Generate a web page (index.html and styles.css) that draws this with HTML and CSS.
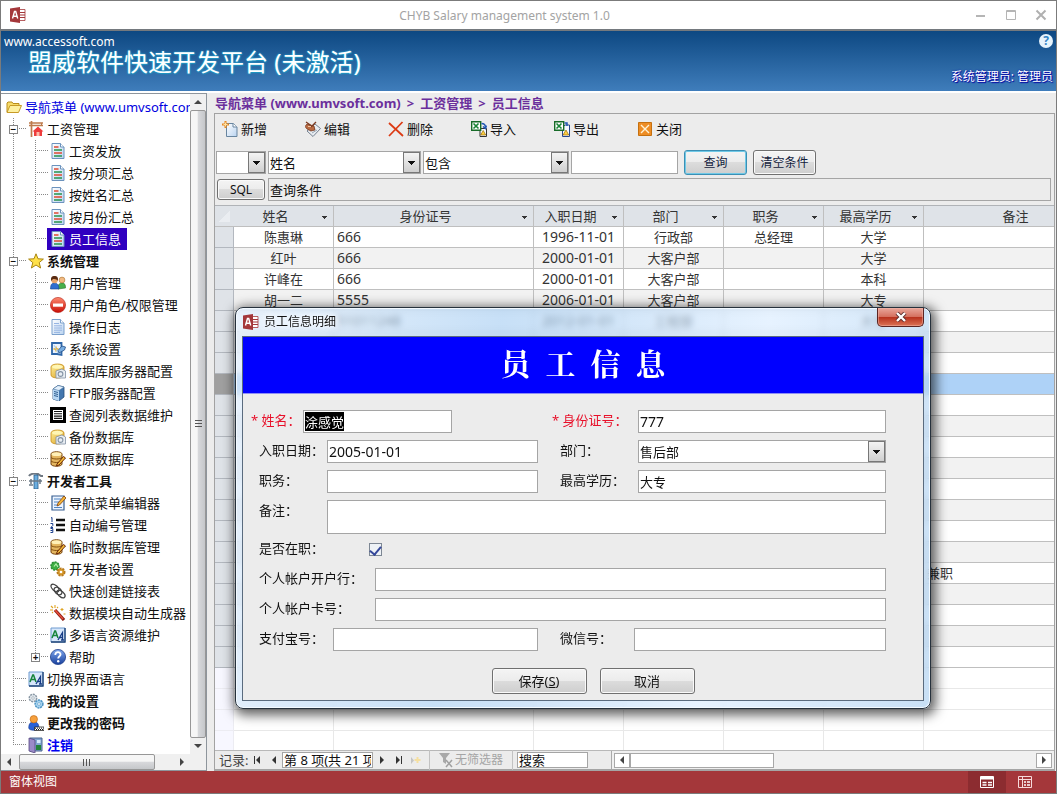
FILE: index.html
```html
<!DOCTYPE html>
<html lang="zh-CN">
<head>
<meta charset="utf-8">
<title>CHYB Salary management system 1.0</title>
<link rel="stylesheet" href="styles.css">
</head>
<body>
<svg class="sprite" aria-hidden="true">
  <defs>
    <linearGradient id="g-blue" x1="0" y1="0" x2="0" y2="1"><stop offset="0" stop-color="#7fa8ee"/><stop offset="1" stop-color="#173f9c"/></linearGradient>
    <linearGradient id="g-page" x1="0" y1="0" x2="1" y2="1"><stop offset="0" stop-color="#fff"/><stop offset="1" stop-color="#b9d3f0"/></linearGradient>
    <linearGradient id="g-gold" x1="0" y1="0" x2="1" y2="1"><stop offset="0" stop-color="#fff3a0"/><stop offset="1" stop-color="#d99a18"/></linearGradient>
    <linearGradient id="g-red" x1="0" y1="0" x2="0" y2="1"><stop offset="0" stop-color="#ff8a70"/><stop offset="1" stop-color="#c80d05"/></linearGradient>
  </defs>
  <symbol id="access" viewBox="0 0 16 16"><path d="M9 2.5h6v11H9z" fill="#fff" stroke="#a4373a" stroke-width=".8"/><path d="M10 5.500h5M10 8h5M10 10.500h5" stroke="#a4373a" stroke-width="1.200"/><path d="M0 1.500 10 0v16L0 14.500z" fill="#a4373a"/><path d="m2.500 11.500 2-7h1.200l2 7M3.300 9.200h3.500" fill="none" stroke="#fff" stroke-width="1.400"/></symbol>
  <symbol id="folder" viewBox="0 0 16 16"><path d="M1 13V4l1-1h4l1 1.500h6V7" fill="#f7dc6a" stroke="#b98d1c"/><path d="m1 13.500 3-7h11.500l-3 7z" fill="#fdf0a0" stroke="#c79a26"/></symbol>
  <symbol id="house" viewBox="0 0 16 16"><path d="M1 2h14M3.500 0v16M1 4.500h14" stroke="#bd7b4c" stroke-width="1.700"/><path d="M13.500 2v3" stroke="#bd7b4c"/><path d="M4.500 10.500 10 5.500l5.500 5H14V15H6v-4.500z" fill="#ee3c3c"/><path d="M8.500 11h3v4h-3z" fill="#ffb9a8"/></symbol>
  <symbol id="report" viewBox="0 0 16 16"><path d="M2 .5h8.500L14 4v11.500H2z" fill="url(#g-page)" stroke="#6b92bd"/><path d="M10.500.5V4H14" fill="#fff" stroke="#6b92bd"/><path d="M4 4h4.500M4 10h8" stroke="#e04a32" stroke-width="1.400"/><path d="M4 7h8M4 13h8" stroke="#27934c" stroke-width="1.400"/></symbol>
  <symbol id="star" viewBox="0 0 16 16"><path d="m8 .8 2 5 5.400.3-4.200 3.500 1.400 5.400L8 12l-4.600 3 1.400-5.400L.6 6.100 6 5.800z" fill="#ffe14a" stroke="#aa8510"/></symbol>
  <symbol id="users" viewBox="0 0 16 16"><path d="M8 14c0-4 1-6 4-6s3.500 2 3.500 5z" fill="#47b04b" stroke="#2a7530" stroke-width=".6"/><circle cx="12" cy="5" r="2.900" fill="#f2ba83" stroke="#a8712f" stroke-width=".6"/><path d="M.5 14c0-4 1-6 4-6s4.500 2 4.500 6z" fill="#2e6ed0" stroke="#194489" stroke-width=".6"/><circle cx="4.500" cy="5" r="3.200" fill="#e7a46b"/><path d="M1.200 6C.5 2 2 1 4.500 1S8.500 2 7.800 6C7 4 4 4 3 4z" fill="#5a2c12"/></symbol>
  <symbol id="stop" viewBox="0 0 16 16"><circle cx="8" cy="8" r="7.600" fill="url(#g-red)" stroke="#b31d12" stroke-width=".6"/><path d="M3 6.500h10v3.200H3z" fill="#fff"/></symbol>
  <symbol id="log" viewBox="0 0 16 16"><path d="M2 .5h8.500L14 4v11.500H2z" fill="url(#g-page)" stroke="#7ba0cc"/><path d="M10.500.5V4H14" fill="#fff" stroke="#7ba0cc"/><path d="M4 4.500h5M4 6.800h8M4 9h8M4 11.200h8M4 13.400h6" stroke="#8daee0" stroke-width=".9"/></symbol>
  <symbol id="config" viewBox="0 0 16 16"><path d="M2 2h9.500v12L7 13H2z" fill="#e9f3ff" stroke="#2e66a9" stroke-width="1.800"/><path d="M3.500 8h5M6 5.500v5" stroke="#e5ad27" stroke-width="1.300"/><path d="m4 4 4 8" stroke="#a9cdf0"/><path d="m8 9.500 4-4.500 3.500 1-1 3-5.500 3z" fill="#78aee2" stroke="#244f88" stroke-width=".8"/></symbol>
  <symbol id="dbserver" viewBox="0 0 16 16"><path d="M1 4c0-4 13-4 13 0v8c0 4-13 4-13 0z" fill="url(#g-gold)" stroke="#c78c15" stroke-width=".8"/><ellipse cx="7.500" cy="3.800" rx="5.500" ry="2" fill="#fff6b4"/><path d="M6 8l6-2 3.500 2v7H6z" fill="#e9eef3" stroke="#8291a3" stroke-width=".8"/><circle cx="10.500" cy="11" r="2.400" fill="none" stroke="#8493a5" stroke-width="1.100"/></symbol>
  <symbol id="server" viewBox="0 0 16 16"><path d="m3 4 5-3.500L14 2v10l-5 4-6-2z" fill="#4377af" stroke="#264c7a" stroke-width=".8"/><path d="m3 4 6 1.500V16l-6-2z" fill="#b7d7f4"/><path d="m3 4 5-3.500L14 2 9 5.500z" fill="#e3f0fc" stroke="#49739d" stroke-width=".5"/><path d="m4 6.500 4 1M4 8.500l4 1M4 10.500l4 1" stroke="#315f90"/></symbol>
  <symbol id="list" viewBox="0 0 16 16"><path d="M0 0h16v16H0z"/><path d="M3 3h10v10H3z" fill="#fff"/><path d="M4 4.500h8M4 6.800h8M4 9.100h8M4 11.400h8" stroke="#111" stroke-width="1.100"/></symbol>
  <symbol id="dbedit" viewBox="0 0 16 16"><path d="M1 3c0-3 11-3 11 0v10c0 3-11 3-11 0z" fill="#e4b660" stroke="#75430d"/><ellipse cx="6.500" cy="3.200" rx="5" ry="1.900" fill="#fff0b8"/><path d="M1 6.500c2 2 9 2 11 0M1 10c2 2 9 2 11 0" fill="none" stroke="#85500f"/><path d="m7 13 6.500-7.500 2 1.500L9 14l-2.500 1z" fill="#f5be38" stroke="#6b2506"/></symbol>
  <symbol id="tools" viewBox="0 0 16 16"><path d="M1 3c1-2 5-3 9-2l3 2h2" fill="none" stroke="#6f7882" stroke-width="2"/><path d="M6 2h4v14H6z" fill="#6baee0" stroke="#285b88" stroke-width=".8"/><path d="M1 8h13M3 6v5M12 6v5M1 12h4" stroke="#6b7987" stroke-width="1.500"/></symbol>
  <symbol id="noteedit" viewBox="0 0 16 16"><path d="M2 1h12v14H2z" fill="#ecf4ff" stroke="#385f91" stroke-width="1.200"/><path d="M4 4h7M4 7h5M4 10h3M4 12.500h8" stroke="#4f84c2"/><path d="m7 11 1-3 6-7 2 2-6.500 7z" fill="#f4b437" stroke="#7c3d0c" stroke-width=".8"/></symbol>
  <symbol id="numbers" viewBox="0 0 16 16"><path d="M6 3h9M6 8h9M6 13h9" stroke="#111" stroke-width="2.600"/><path d="m1 1 1-.5V5M.5 6.500h2.300v2l-2 2H3M.5 11.500h2.300v4H.5m0-2h2" fill="none" stroke="#193d8c"/></symbol>
  <symbol id="gears" viewBox="0 0 16 16"><circle cx="5" cy="5" r="4" fill="#3eaf43" stroke="#2b8c35" stroke-dasharray="2 1" stroke-width="1.500"/><path d="M4 5.500 6 3l2 3" fill="none" stroke="#b8efb0" stroke-width="1.200"/><circle cx="11" cy="11" r="3.600" fill="#d79a2c" stroke="#b87a1c" stroke-dasharray="2 1" stroke-width="1.800"/><circle cx="11" cy="11" r="1.300" fill="#fff"/></symbol>
  <symbol id="link" viewBox="0 0 16 16"><g fill="none" stroke="#444" stroke-width="1.300"><ellipse cx="5" cy="5" rx="4.800" ry="2.600" transform="rotate(42 5 5)"/><ellipse cx="8" cy="8" rx="4.500" ry="2.900" transform="rotate(42 8 8)"/><ellipse cx="11" cy="11" rx="4.800" ry="2.600" transform="rotate(42 11 11)"/></g></symbol>
  <symbol id="wand" viewBox="0 0 16 16"><path d="m5 5 9 10" stroke="#8c1d13" stroke-width="3.200"/><path d="m5 5 8 9" stroke="#e8503b" stroke-width="1.400"/><path d="M5 0v3M0 5h3M1 1l2 2M8 2 7 3M2 8l1-1M12 3v3M10.500 4.500h3M13.500 9h2" stroke="#e0a524" stroke-width="1.100"/></symbol>
  <symbol id="lang" viewBox="0 0 16 16"><path d="M1 1h14v14H1z" fill="#d7e7fb" stroke="#6e9bd0"/><path d="M15 1v14H1" fill="none" stroke="#23477a" stroke-width="1.400"/><path d="m2 11 2.800-7h.7L8 11M3.500 8.500h4" fill="none" stroke="#16843a" stroke-width="1.500"/><path d="m8 13 4.500-7.500V13M9.500 10.500h3M11 13h3" fill="none" stroke="#173c85" stroke-width="1.300"/></symbol>
  <symbol id="help" viewBox="0 0 16 16"><circle cx="8" cy="8" r="7.600" fill="url(#g-blue)" stroke="#23438d" stroke-width=".8"/><path d="M5.300 6c0-4 5.600-3.500 5.200-.3C10.300 7.400 8.200 7.200 8.200 9.600" fill="none" stroke="#fff" stroke-width="1.900"/><circle cx="8.200" cy="12.200" r="1.200" fill="#fff"/></symbol>
  <symbol id="mygear" viewBox="0 0 16 16"><circle cx="5" cy="5" r="3.700" fill="#e3e9ee" stroke="#8a98a5" stroke-width="1.500" stroke-dasharray="2 .8"/><circle cx="5" cy="5" r="1.300" fill="#fff" stroke="#8a98a5" stroke-width=".6"/><circle cx="11" cy="11" r="3.900" fill="#a5d1ee" stroke="#4b93c3" stroke-width="1.500" stroke-dasharray="2 .8"/><circle cx="11" cy="11" r="1.400" fill="#fff" stroke="#4b93c3" stroke-width=".6"/></symbol>
  <symbol id="password" viewBox="0 0 16 16"><path d="M.8 13c0-5 2-6 5-6s5 1 5 6c0 3-10 3-10 0z" fill="#2a62d8" stroke="#173c96" stroke-width=".7"/><circle cx="5.800" cy="4.200" r="3.700" fill="#f6a03c" stroke="#b8620e" stroke-width=".6"/><path d="M6.500 12H16v3.500H6.500z" fill="#fff" stroke="#111" stroke-width=".7"/><path d="M7 13.200h8.500M8 14.500h7" stroke="#111" stroke-dasharray="1 1"/></symbol>
  <symbol id="logout" viewBox="0 0 16 16"><path d="M2 1h12v13H2z" fill="#81a5d2" stroke="#4c648f"/><path d="m1 1 6 2v13l-6-2z" fill="#9a8ac8" stroke="#554880" stroke-width=".8"/><path d="M9 3h3.500v3H9z" fill="#d6e8fa"/><path d="M8 8h5v5H8z" fill="#23833b"/></symbol>
  <symbol id="new" viewBox="0 0 16 16"><path d="M4.500 2.500h7L15 6v9.500H4.500z" fill="url(#g-page)" stroke="#68859f"/><path d="M11 2.500V6h4" fill="#fff" stroke="#68859f"/><path d="M3.500 0v7M0 3.500h7" stroke="#e78821" stroke-width="2"/><path d="M3.500 1.500v4M1.500 3.500h4" stroke="#ffe2a0"/></symbol>
  <symbol id="edit" viewBox="0 0 16 16"><path d="m2 10 8-7 5.500 4.500L8 15.500z" fill="#e8edf2" stroke="#75818f"/><path d="m5 10 5-3M7 12l5-3" stroke="#98a5b2"/><path d="M0 5.500 2 3l3 1 4 1 1 4-4 1-4-2z" fill="#b96a42" stroke="#6b3018" stroke-width=".7"/><path d="m1 1 5 3.500M6 6l5-5" stroke="#7c3a20" stroke-width="1.300"/><path d="M3 5.500h3" stroke="#f0c8a4"/></symbol>
  <symbol id="delete" viewBox="0 0 16 16"><path d="m1 2 14 13M14.500 1 1 15" fill="none" stroke="#dc3b14" stroke-width="1.800"/></symbol>
  <symbol id="sheet" viewBox="0 0 16 16"><path d="M.7.700h9v8.600h-9z" fill="#fff" stroke="#176b28" stroke-width="1.400"/><path d="m2.500 2.500 5 5m0-5-5 5" stroke="#178334" stroke-width="1.600"/></symbol>
  <symbol id="import" viewBox="0 0 16 16"><path d="M9 7.500h6.500v8H9z" fill="#f4f8ff" stroke="#333"/><use href="#sheet"/><path d="m12.200 9.500 2.500 4.500h-5z" fill="#ffd343" stroke="#9b6b00" stroke-width=".7"/><path d="M10.500 2.500c3 0 4 1.500 4 4M12 5.500l2.500 2 1-3" fill="none" stroke="#2057b3" stroke-width="1.500"/></symbol>
  <symbol id="export" viewBox="0 0 16 16"><path d="M8.500 6.500 11 4h4.500v11.500h-7z" fill="#f4f8ff" stroke="#27488c"/><use href="#sheet"/><path d="m12 9 2.700 5H9z" fill="#ffd343" stroke="#9b6b00" stroke-width=".7"/><path d="M10.500 2h2.500v3" fill="none" stroke="#2057b3" stroke-width="1.500"/></symbol>
  <symbol id="close" viewBox="0 0 16 16"><path d="M1.500 1.500h13v13h-13z" fill="#ee8d24" stroke="#c5700f"/><path d="m4 4 8 8m0-8-8 8" stroke="#fff3d5" stroke-width="1.400"/></symbol>
</svg>

<div class="window">
  <header class="titlebar">
    <svg class="app-icon"><use href="#access"/></svg>
    <h1 class="window-title">CHYB Salary management system 1.0</h1>
    <div class="window-controls">
      <button aria-label="最小化"><svg viewBox="0 0 12 12"><path d="M1 7h9" stroke="#b5b5b5" stroke-width="2"/></svg></button>
      <button aria-label="最大化"><svg viewBox="0 0 12 12"><path d="M1.500 1.500h9v9h-9zM1 2.500h10" fill="none" stroke="#b5b5b5"/></svg></button>
      <button aria-label="关闭"><svg viewBox="0 0 12 12"><path d="m1.500 1.500 9 9m0-9-9 9" stroke="#b0b0b0" stroke-width="2"/></svg></button>
    </div>
  </header>

  <div class="banner">
    <div class="brand">
      <a class="site" href="#">www.accessoft.com</a>
      <div class="product">盟威软件快速开发平台 (未激活)</div>
    </div>
    <div class="account">
      <button class="help" aria-label="帮助">?</button>
      <div class="user">系统管理员: 管理员</div>
    </div>
  </div>

  <div class="main">
    <nav class="sidebar">
      <div class="tree">
        <a class="item root" href="#"><svg><use href="#folder"/></svg>导航菜单 (www.umvsoft.com)</a>
        <ul>
          <li><div class="row"><button class="toggle" aria-label="折叠">−</button><a class="item" href="#"><svg><use href="#house"/></svg>工资管理</a></div>
            <ul>
              <li><div class="row"><a class="item" href="#"><svg><use href="#report"/></svg>工资发放</a></div></li>
              <li><div class="row"><a class="item" href="#"><svg><use href="#report"/></svg>按分项汇总</a></div></li>
              <li><div class="row"><a class="item" href="#"><svg><use href="#report"/></svg>按姓名汇总</a></div></li>
              <li><div class="row"><a class="item" href="#"><svg><use href="#report"/></svg>按月份汇总</a></div></li>
              <li><div class="row"><a class="item selected" href="#"><svg><use href="#report"/></svg>员工信息</a></div></li>
            </ul>
          </li>
          <li><div class="row"><button class="toggle" aria-label="折叠">−</button><a class="item strong" href="#"><svg><use href="#star"/></svg>系统管理</a></div>
            <ul>
              <li><div class="row"><a class="item" href="#"><svg><use href="#users"/></svg>用户管理</a></div></li>
              <li><div class="row"><a class="item" href="#"><svg><use href="#stop"/></svg>用户角色/权限管理</a></div></li>
              <li><div class="row"><a class="item" href="#"><svg><use href="#log"/></svg>操作日志</a></div></li>
              <li><div class="row"><a class="item" href="#"><svg><use href="#config"/></svg>系统设置</a></div></li>
              <li><div class="row"><a class="item" href="#"><svg><use href="#dbserver"/></svg>数据库服务器配置</a></div></li>
              <li><div class="row"><a class="item" href="#"><svg><use href="#server"/></svg>FTP服务器配置</a></div></li>
              <li><div class="row"><a class="item" href="#"><svg><use href="#list"/></svg>查阅列表数据维护</a></div></li>
              <li><div class="row"><a class="item" href="#"><svg><use href="#dbserver"/></svg>备份数据库</a></div></li>
              <li><div class="row"><a class="item" href="#"><svg><use href="#dbedit"/></svg>还原数据库</a></div></li>
            </ul>
          </li>
          <li><div class="row"><button class="toggle" aria-label="折叠">−</button><a class="item strong" href="#"><svg><use href="#tools"/></svg>开发者工具</a></div>
            <ul>
              <li><div class="row"><a class="item" href="#"><svg><use href="#noteedit"/></svg>导航菜单编辑器</a></div></li>
              <li><div class="row"><a class="item" href="#"><svg><use href="#numbers"/></svg>自动编号管理</a></div></li>
              <li><div class="row"><a class="item" href="#"><svg><use href="#dbedit"/></svg>临时数据库管理</a></div></li>
              <li><div class="row"><a class="item" href="#"><svg><use href="#gears"/></svg>开发者设置</a></div></li>
              <li><div class="row"><a class="item" href="#"><svg><use href="#link"/></svg>快速创建链接表</a></div></li>
              <li><div class="row"><a class="item" href="#"><svg><use href="#wand"/></svg>数据模块自动生成器</a></div></li>
              <li><div class="row"><a class="item" href="#"><svg><use href="#lang"/></svg>多语言资源维护</a></div></li>
              <li><div class="row"><button class="toggle" aria-label="展开">+</button><a class="item" href="#"><svg><use href="#help"/></svg>帮助</a></div></li>
            </ul>
          </li>
          <li><div class="row"><a class="item" href="#"><svg><use href="#lang"/></svg>切换界面语言</a></div></li>
          <li><div class="row"><a class="item strong" href="#"><svg><use href="#mygear"/></svg>我的设置</a></div></li>
          <li><div class="row"><a class="item strong" href="#"><svg><use href="#password"/></svg>更改我的密码</a></div></li>
          <li><div class="row"><a class="item strong blue" href="#"><svg><use href="#logout"/></svg>注销</a></div></li>
        </ul>
      </div>
      <div class="vscroll">
        <button class="arrow up" aria-label="向上"></button>
        <div class="thumb"><i></i></div>
        <button class="arrow down" aria-label="向下"></button>
      </div>
      <div class="hscroll">
        <button class="arrow left" aria-label="向左"></button>
        <div class="thumb"><i></i></div>
        <button class="arrow right" aria-label="向右"></button>
      </div>
    </nav>

    <main class="content">
      <div class="breadcrumb"><span>导航菜单 (www.umvsoft.com)</span><span>&gt;</span><span>工资管理</span><span>&gt;</span><span>员工信息</span></div>
      <section class="panel">
        <div class="toolbar">
          <button><svg><use href="#new"/></svg>新增</button>
          <button><svg><use href="#edit"/></svg>编辑</button>
          <button><svg><use href="#delete"/></svg>删除</button>
          <button><svg><use href="#import"/></svg>导入</button>
          <button><svg><use href="#export"/></svg>导出</button>
          <button><svg><use href="#close"/></svg>关闭</button>
        </div>
        <div class="filters">
          <select class="logic" aria-label="逻辑"><option></option></select>
          <select class="field-name" aria-label="字段"><option>姓名</option></select>
          <select class="operator" aria-label="条件"><option>包含</option></select>
          <input class="value" type="text" aria-label="值">
          <button class="btn primary">查询</button>
          <button class="btn">清空条件</button>
        </div>
        <div class="sql">
          <button class="btn">SQL</button>
          <input type="text" aria-label="查询条件" value="查询条件" readonly>
        </div>
        <div class="grid">
          <table>
            <colgroup><col class="c-sel"><col class="c-mid"><col class="c-id"><col class="c-date"><col class="c-mid"><col class="c-mid"><col class="c-mid"><col class="c-note"></colgroup>
            <thead><tr><th class="corner"></th><th>姓名</th><th>身份证号</th><th>入职日期</th><th>部门</th><th>职务</th><th>最高学历</th><th>备注</th></tr></thead>
            <tbody>
              <tr><td><td>陈惠琳<td>666<td>1996-11-01<td>行政部<td>总经理<td>大学<td></tr>
              <tr><td><td>红叶<td>666<td>2000-01-01<td>大客户部<td><td>大学<td></tr>
              <tr><td><td>许峰在<td>666<td>2000-01-01<td>大客户部<td><td>本科<td></tr>
              <tr><td><td>胡一二<td>5555<td>2006-01-01<td>大客户部<td><td>大专<td></tr>
              <tr><td><td><td>51011248<td>2012-01-01<td>工程部<td><td>大专<td></tr>
              <tr><td><td><td><td><td><td><td><td></tr>
              <tr><td><td><td><td><td><td><td><td></tr>
              <tr class="current"><td><td><td><td><td><td><td><td></tr>
              <tr><td><td><td><td><td><td><td><td></tr>
              <tr><td><td><td><td><td><td><td><td></tr>
              <tr><td><td><td><td><td><td><td><td></tr>
              <tr><td><td><td><td><td><td><td><td></tr>
              <tr><td><td><td><td><td><td><td><td></tr>
              <tr><td><td><td><td><td><td><td><td></tr>
              <tr><td><td><td><td><td><td><td><td></tr>
              <tr><td><td><td><td><td><td><td><td></tr>
              <tr><td><td><td><td><td><td><td><td>兼职</tr>
              <tr><td><td><td><td><td><td><td><td></tr>
              <tr><td><td><td><td><td><td><td><td></tr>
              <tr><td><td><td><td><td><td><td><td></tr>
              <tr><td><td><td><td><td><td><td><td></tr>
            </tbody>
            <tbody class="blank">
              <tr><td><td><td><td><td><td><td><td></tr>
              <tr><td><td><td><td><td><td><td><td></tr>
              <tr><td><td><td><td><td><td><td><td></tr>
              <tr><td><td><td><td><td><td><td><td></tr>
            </tbody>
          </table>
        </div>
        <div class="records">
          <span class="rec-label">记录:</span>
          <button aria-label="第一条"><svg viewBox="0 0 10 10"><path d="M2.500 1v8" stroke="#333"/><path d="M8 1v8L4 5z" fill="#333"/></svg></button>
          <button aria-label="上一条"><svg viewBox="0 0 10 10"><path d="M7 1v8L3 5z" fill="#333"/></svg></button>
          <input class="position" type="text" aria-label="当前记录" value="第 8 项(共 21 项)">
          <button aria-label="下一条"><svg viewBox="0 0 10 10"><path d="M3 1v8l4-4z" fill="#333"/></svg></button>
          <button aria-label="最后一条"><svg viewBox="0 0 10 10"><path d="M7.500 1v8" stroke="#333"/><path d="M2 1v8l4-4z" fill="#333"/></svg></button>
          <button aria-label="新记录" disabled><svg viewBox="0 0 10 10"><path d="M0 2v7l3-3.500z" fill="#c4c4c4"/><path d="M6.500 2v6M3.500 5h6" stroke="#f5dfa0" stroke-width="2"/></svg></button>
          <span class="nofilter"><svg viewBox="0 0 16 16"><path d="M1 1h11L8 6v6l-3-2V6z" fill="#a9a9a9"/><path d="m8 8 6 7m0-7-6 7" stroke="#a0a0a0" stroke-width="1.500"/></svg>无筛选器</span>
          <input class="search" type="text" aria-label="搜索" value="搜索">
          <div class="grid-scroll"><button class="arrow left" aria-label="向左"></button><div class="bar"></div><button class="arrow right" aria-label="向右"></button></div>
        </div>
      </section>
    </main>
  </div>

  <footer class="status">
    <span>窗体视图</span>
    <div class="views">
      <button class="active" aria-label="窗体视图"><svg viewBox="0 0 14 14"><path d="M.5 1.500h13v11H.5z" fill="none" stroke="#fff"/><path d="M1 1h12v3.500H1z" fill="#fff"/><path d="M2.500 7.500h4M2.500 10h4M8 7.500h4M8 10h4" stroke="#fff" stroke-width="1.500"/></svg></button>
      <button aria-label="布局视图"><svg viewBox="0 0 14 14"><path d="M.5 1.500h13v11H.5zM.5 4.500h13M4.500 1v11" fill="none" stroke="#f6dada"/><path d="M6 7h2M6 10h2M9 7h3M9 10h3" stroke="#fff" stroke-width="1.300"/></svg></button>
    </div>
  </footer>
</div>

<div class="dialog" role="dialog" aria-labelledby="dialog-title">
  <div class="dialog-bar">
    <svg class="app-icon"><use href="#access"/></svg>
    <span id="dialog-title">员工信息明细</span>
    <button class="dialog-close" aria-label="关闭"><svg viewBox="0 0 12 10"><path d="m2 1 8 8m0-8-8 8" stroke="#5b2b2b" stroke-width="4"/><path d="m2 1 8 8m0-8-8 8" stroke="#fff" stroke-width="2.400"/></svg></button>
  </div>
  <form class="dialog-body">
    <h2>员&nbsp; 工&nbsp; 信&nbsp; 息</h2>
    <div class="form">
      <div class="line">
        <div class="cell required"><label class="l-xs" for="name">* 姓名：</label><input id="name" class="short" type="text" value="涂感觉" autofocus></div>
        <div class="cell right required"><label class="l-rq" for="idno">* 身份证号：</label><input id="idno" class="num" type="text" value="777"></div>
      </div>
      <div class="line">
        <div class="cell"><label class="l-sm" for="hired">入职日期：</label><input id="hired" class="num" type="text" value="2005-01-01"></div>
        <div class="cell right"><label class="l-md" for="dept">部门：</label><select id="dept"><option>售后部</option></select></div>
      </div>
      <div class="line">
        <div class="cell"><label class="l-sm" for="post">职务：</label><input id="post" type="text"></div>
        <div class="cell right"><label class="l-md" for="degree">最高学历：</label><input id="degree" type="text" value="大专"></div>
      </div>
      <div class="line">
        <div class="cell wide"><label class="l-sm" for="note">备注：</label><textarea id="note"></textarea></div>
      </div>
      <div class="line check">
        <div class="cell wide"><label class="l-lg" for="active">是否在职：</label><input id="active" type="checkbox" checked></div>
      </div>
      <div class="line">
        <div class="cell wide"><label class="l-xl" for="bank">个人帐户开户行：</label><input id="bank" type="text"></div>
      </div>
      <div class="line">
        <div class="cell wide"><label class="l-xl" for="card">个人帐户卡号：</label><input id="card" type="text"></div>
      </div>
      <div class="line">
        <div class="cell"><label class="l-pay" for="alipay">支付宝号：</label><input id="alipay" type="text"></div>
        <div class="cell right"><label class="l-pay" for="wechat">微信号：</label><input id="wechat" type="text"></div>
      </div>
    </div>
    <div class="actions">
      <button class="btn" type="button">保存(<u>S</u>)</button>
      <button class="btn" type="button">取消</button>
    </div>
  </form>
</div>
<script src="main.js"></script>
</body>
</html>
```
FILE: styles.css
```css
* { box-sizing: border-box; }

body {
  margin: 0;
  height: 100vh;
  overflow: hidden;
  position: relative;
  font: 13px/20px "Noto Sans", "Noto Sans CJK SC", sans-serif;
  color: #111;
}

button, input, select, textarea {
  font: inherit;
  color: inherit;
  margin: 0;
  border-radius: 0;
  outline: 0;
}
button { padding: 0; border: 0; background: none; }
a { color: inherit; text-decoration: none; }
svg { display: block; flex: none; }
.sprite { position: absolute; width: 0; height: 0; }

.window {
  height: 100%;
  display: flex;
  flex-direction: column;
  border: 1px solid #7b7b7b;
  background: #fff;
}

/* Title bar */
.titlebar {
  display: flex;
  align-items: center;
  height: 30px;
  padding: 0 9px;
  border-bottom: 2px solid #74797e;
}
.app-icon { width: 16px; height: 16px; }
.window-title { flex: 1; margin: 0; padding: 2px 0 0 8px; font-size: 12px; font-weight: 400; text-align: center; color: #a3a3a3; }
.window-controls { display: flex; gap: 18px; }
.window-controls svg { width: 12px; height: 12px; }

/* Banner */
.banner {
  display: flex;
  justify-content: space-between;
  height: 60px;
  color: #fff;
  background: linear-gradient(#0d4882, #3f7dbb);
}
.brand { padding: 1px 3px; }
.site { display: block; font-size: 12px; line-height: 20px; }
.product {
  padding-left: 24px;
  font-size: 24px;
  line-height: 20px;
  text-shadow: 0 0 2px #27c4e8, 1px 1px 1px #1d87b4;
}
.account {
  display: flex;
  flex-direction: column;
  align-items: flex-end;
  justify-content: space-between;
  padding: 3px 3px 4px;
}
.help {
  width: 14px;
  height: 14px;
  border-radius: 50%;
  background: #e6f3fc;
  color: #3484c4;
  font-size: 12px;
  font-weight: 700;
  line-height: 14px;
}
.user { font-size: 12px; text-shadow: 0 0 2px #0000b0, 1px 1px 1px #0000a0; }

.main { flex: 1; min-height: 0; display: flex; padding-top: 2px; }

/* Navigation tree */
.sidebar {
  flex: none;
  width: 206px;
  display: grid;
  grid-template: 1fr 16px / 1fr 16px;
  border: 1px solid #8e959c;
  border-left: 0;
}
.tree { overflow: hidden; padding: 2px 0 0 1px; white-space: nowrap; }
.tree ul { list-style: none; margin: 0; padding: 0; }
.tree ul ul { padding-left: 22px; }
.tree li {
  background:
    repeating-linear-gradient(90deg, #888 0 1px, transparent 1px 2px) 11px 10px / 13px 1px no-repeat,
    repeating-linear-gradient(#888 0 1px, transparent 1px 2px) 11px 0 / 1px 100% no-repeat;
}
.tree li:last-child { background-size: 13px 1px, 1px 11px; }
.row { display: flex; align-items: center; height: 22px; padding-left: 24px; }
.item { display: flex; align-items: center; gap: 3px; height: 22px; padding: 0 2px; }
.item svg { width: 16px; height: 16px; }
.root { color: #0000e0; padding-left: 4px; }
.strong { font-weight: 700; }
.blue { color: #0000f0; }
.selected { background: #3000c0; color: #fff; padding-right: 6px; margin-left: -1px; padding-left: 3px; }
.toggle {
  width: 9px;
  height: 9px;
  margin: 0 8px 0 -17px;
  border: 1px solid #848484;
  background: #fff;
  font-size: 10px;
  font-weight: 700;
  line-height: 7px;
}

/* Scroll bars */
.vscroll, .hscroll { display: flex; background: #f0f0f0; }
.vscroll { flex-direction: column; }
.hscroll { grid-column: 1 / -1; padding-right: 16px; }
.arrow { flex: none; display: grid; place-items: center; width: 16px; height: 16px; }
.arrow::before { content: ""; border: 4px solid transparent; }
.up::before { border-top: 0; border-bottom-color: #444; }
.down::before { border-bottom: 0; border-top-color: #444; }
.left::before { border-left: 0; border-right-color: #444; }
.right::before { border-right: 0; border-left-color: #444; }
.thumb { flex: 1; display: grid; place-items: center; border: 1px solid #979797; border-radius: 2px; }
.vscroll .thumb { background: linear-gradient(90deg, #f6f6f6 45%, #d8d9dc 50%, #c5c7ca); }
.hscroll .thumb { background: linear-gradient(#f6f6f6 45%, #d8d9dc 50%, #c5c7ca); flex: 0 1 136px; margin: 0 auto 0 2px; }
.vscroll i { width: 7px; height: 8px; background: repeating-linear-gradient(#555 0 1px, transparent 1px 3px); }
.hscroll i { width: 8px; height: 7px; background: repeating-linear-gradient(90deg, #555 0 1px, transparent 1px 3px); }

/* Content */
.content {
  flex: 1;
  min-width: 0;
  display: flex;
  flex-direction: column;
  padding-left: 7px;
  background: #ececec;
}
.breadcrumb { display: flex; gap: 6px; height: 20px; padding-left: 1px; font-weight: 700; color: #6b2f9c; white-space: nowrap; }
.panel {
  flex: 1;
  min-height: 0;
  display: flex;
  flex-direction: column;
  margin-right: 1px;
  border: 1px solid #a2a2a2;
  border-bottom: 2px solid #a5a5a5;
}
.toolbar { display: flex; height: 30px; padding-left: 7px; }
.toolbar button { display: flex; align-items: center; gap: 3px; width: 83px; }
.toolbar svg { width: 16px; height: 16px; }
.filters { display: flex; align-items: center; gap: 2px; padding: 6px 1px 3px; height: 34px; }
.sql { display: flex; align-items: center; gap: 3px; padding: 0 3px 0 2px; height: 23px; }

input, select, textarea { border: 1px solid #a5a5a5; background: #fff; padding: 0 1px; min-width: 0; }
select {
  appearance: none;
  background:
    linear-gradient(#111, #111) right 5px top 9px / 7px 1px no-repeat,
    linear-gradient(#111, #111) right 6px top 10px / 5px 1px no-repeat,
    linear-gradient(#111, #111) right 7px top 11px / 3px 1px no-repeat,
    linear-gradient(#111, #111) right 8px top 12px / 1px 1px no-repeat,
    linear-gradient(#f4f4f4, #cfcfcf) right 1px top 1px / 15px calc(100% - 2px) no-repeat,
    linear-gradient(#777, #777) right 0 top / 17px 100% no-repeat,
    #fff;
}
.filters select, .filters input { height: 23px; }
.logic { width: 50px; }
.field-name { width: 153px; }
.operator { width: 146px; }
.value { width: 107px; }
.btn {
  border: 1px solid #707070;
  border-radius: 3px;
  background: linear-gradient(#f4f4f4, #ececec 48%, #dcdcdc 50%, #cecece);
  box-shadow: inset 0 0 0 1px #fafafa;
}
.filters .btn { flex: none; width: 63px; height: 25px; margin-left: 4px; font-size: 12px; color: #12213c; }
.filters .primary { border-color: #3b8fb4; box-shadow: inset 0 0 0 1px #70c9e7; }
.sql .btn { width: 48px; height: 21px; font-size: 12px; line-height: 18px; }
.sql input { flex: 1; height: 23px; background: #ececec; }

/* Data grid */
.grid { flex: 1; min-height: 0; overflow: hidden; margin-top: 4px; background: #fff; border-top: 1px solid #b0b3b7; }
table { width: 893px; table-layout: fixed; border-collapse: separate; border-spacing: 0; color: #333; }
.c-sel { width: 19px; }
.c-mid { width: 100px; }
.c-id { width: 200px; }
.c-date { width: 90px; }
.c-note { width: 184px; }
th, td {
  height: 21px;
  padding: 0;
  border: solid #bfbfbf;
  border-width: 0 1px 1px 0;
  font-weight: 400;
  line-height: 20px;
  text-align: center;
  white-space: nowrap;
  overflow: hidden;
}
th {
  padding-right: 16px;
  background:
    linear-gradient(#333, #333) right 6px top 10px / 5px 1px no-repeat,
    linear-gradient(#333, #333) right 7px top 11px / 3px 1px no-repeat,
    linear-gradient(#333, #333) right 8px top 12px / 1px 1px no-repeat,
    #dfe3e8;
}
th:last-child { padding: 0; background: #dfe3e8; }
.corner { padding: 0; border-right: 0; background: linear-gradient(135deg, #dfe3e8 50%, #eaedf1 50%) 4px 5px / 11px 11px no-repeat, #dfe3e8; }
td:nth-child(1) { background: #dfe3e8; border-color: #b3b8bf; }
td:nth-child(3), td:nth-child(4) { font-size: 14px; }
td:nth-child(3), td:nth-child(8) { text-align: left; padding-left: 3px; }
tr:nth-child(even) td:not(:first-child) { background: #f2f2f2; }
.current td:not(:first-child):not(:first-child) { background: #aed2f7; }
.current td:first-child { background: #a0a0a0; }
.blank tr td:not(:first-child) { background: #fff; border-color: #e8e8e8; }
.blank td:first-child { background: #f7f7ff; border-color: #ececf2; }

/* Record navigator */
.records { display: flex; align-items: center; height: 19px; border-top: 1px solid #b8b8b8; background: #ececec; white-space: nowrap; }
.rec-label { width: 33px; padding-left: 4px; color: #444; }
.records button { width: 17px; flex: none; }
.records button svg { width: 10px; height: 10px; margin: auto; }
.records input { height: 16px; line-height: 16px; }
.position { width: 91px; }
.nofilter { display: flex; align-items: center; width: 84px; margin-left: 5px; padding-left: 8px; gap: 1px; border: solid #c2c2c2; border-width: 0 1px; color: #a5a5a5; font-size: 12px; }
.nofilter svg { width: 16px; height: 16px; }
.search { width: 71px; margin-left: 4px; }
.grid-scroll { flex: 1; display: flex; align-items: center; margin-left: 23px; padding: 0 2px; height: 18px; border-left: 1px solid #aaa; background: #f0f0f0; }
.grid-scroll .arrow { width: 16px; height: 15px; border: 1px solid #a8a8a8; background: #fff; }
.bar { width: 144px; height: 15px; border: 1px solid #a8a8a8; background: #fff; margin-right: auto; }

/* Status bar */
.status { display: flex; justify-content: space-between; height: 22px; padding: 0 12px 0 8px; background: #a4373a; color: #fff; font-size: 12px; line-height: 21px; }
.views { display: flex; }
.views button { width: 38px; display: grid; place-items: center; }
.views svg { width: 14px; height: 14px; }
.views .active { background: #8c2c30; }

/* Dialog floating over the main window */
.dialog {
  position: absolute;
  left: 235px;
  top: 307px;
  width: 696px;
  padding: 0 6px 7px;
  border: 1px solid #26313c;
  border-radius: 8px;
  background: linear-gradient(100deg, #dcebfba0, #a6cdf2a0 35%, #b8d7f5a0 50%, #d8ebffa0 70%, #a9cef0a0);
  backdrop-filter: blur(3px);
  box-shadow: inset 0 0 0 1px #f2f9ff, 2px 3px 12px 3px #000000a0;
}
.dialog-bar { display: flex; align-items: center; gap: 5px; height: 28px; padding-left: 1px; font-size: 12px; }
.dialog-bar span { text-shadow: 0 0 6px #fff, 0 0 6px #fff; }
.dialog-close {
  align-self: flex-start;
  display: grid;
  place-items: center;
  width: 47px;
  height: 19px;
  margin: 0 0 0 auto;
  border: 1px solid #5b2422;
  border-top: 0;
  border-radius: 0 0 5px 5px;
  background: linear-gradient(#e9a79b, #d5705f 48%, #b62f1b 50%, #dc7356);
  box-shadow: inset 0 0 0 1px #f2b8ac80;
}
.dialog-close svg { width: 12px; height: 10px; }
.dialog-body { border: 1px solid #5a6b7e; background: #ececec; }
.dialog h2 {
  margin: 0;
  height: 57px;
  border-bottom: 1px solid #8e8ef5;
  background: #00f;
  color: #fff;
  font: 700 30px/56px "Liberation Serif", "Noto Serif CJK SC", "Noto Sans CJK SC", serif;
  text-align: center;
}
.form { display: flex; flex-direction: column; gap: 7px; padding: 16px 37px 0 8px; }
.line { display: flex; }
.cell { display: flex; flex: none; width: 301px; padding: 0 14px 0 8px; }
.cell.right { flex: 1; padding-right: 0; }
.cell.wide { flex: 1; padding-right: 0; }
.cell.required { padding-left: 0; color: #e8102a; }
.cell label { flex: none; white-space: nowrap; }
.cell input, .cell select { flex: 1; height: 23px; color: #111; }
.cell .num { font-size: 14px; }
.cell .short { flex: none; width: 149px; }
.cell textarea { flex: 1; height: 34px; resize: none; }
.check { height: 20px; align-items: flex-start; }
.check label { line-height: 14px; }
.cell input[type="checkbox"] {
  flex: none;
  appearance: none;
  display: grid;
  place-items: center;
  width: 13px;
  height: 13px;
  margin-top: 2px;
  padding: 0;
  border-color: #7d8794;
  background: #eef2f6;
}
input[type="checkbox"]:checked::before {
  content: "";
  width: 5px;
  height: 9px;
  margin-bottom: 2px;
  border: solid #34479a;
  border-width: 0 2px 2px 0;
  transform: rotate(40deg);
}
.l-xs { width: 52px; }
.l-sm { width: 68px; }
.l-pay { width: 74px; }
.l-md { width: 78px; }
.l-rq { width: 86px; }
.l-lg { width: 110px; }
.l-xl { width: 116px; }
.actions { display: flex; justify-content: center; gap: 13px; padding: 17px 0 6px; margin-left: 20px; }
.actions .btn { width: 95px; height: 26px; }
::selection { background: #000; color: #fff; }
```
FILE: main.js
```js
const nameField = document.getElementById("name");
nameField.focus();
nameField.select();
```
